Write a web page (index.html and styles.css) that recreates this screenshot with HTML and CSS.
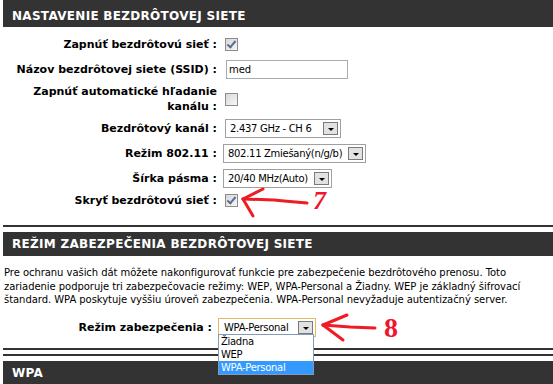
FILE: index.html
```html
<!DOCTYPE html>
<html lang="sk">
<head>
    <meta charset="UTF-8">
    <meta name="viewport" content="width=device-width, initial-scale=1.0">
    <title>Nastavenie bezdrôtovej siete</title>
    <link rel="stylesheet" href="styles.css">
</head>
<body>
<div class="page">

    <div class="box">
        <h2 class="box-title first">NASTAVENIE BEZDRÔTOVEJ SIETE</h2>
        <div class="form">
            <div class="row">
                <div class="lbl">Zapnúť bezdrôtovú sieť :</div>
                <div class="ctl"><span class="check on"></span></div>
            </div>
            <div class="row">
                <div class="lbl">Názov bezdrôtovej siete (SSID) :</div>
                <div class="ctl"><span class="textbox">med</span></div>
            </div>
            <div class="row tall">
                <div class="lbl">Zapnúť automatické hľadanie kanálu :</div>
                <div class="ctl"><span class="check"></span></div>
            </div>
            <div class="row">
                <div class="lbl">Bezdrôtový kanál :</div>
                <div class="ctl"><span class="select channel"><span class="val">2.437 GHz - CH 6</span><span class="btn"></span></span></div>
            </div>
            <div class="row">
                <div class="lbl">Režim 802.11 :</div>
                <div class="ctl"><span class="select mode"><span class="val">802.11 Zmiešaný(n/g/b)</span><span class="btn"></span></span></div>
            </div>
            <div class="row">
                <div class="lbl">Šírka pásma :</div>
                <div class="ctl"><span class="select band"><span class="val">20/40 MHz(Auto)</span><span class="btn"></span></span></div>
            </div>
            <div class="row short">
                <div class="lbl">Skryť bezdrôtovú sieť :</div>
                <div class="ctl"><span class="check on"></span></div>
            </div>
        </div>
    </div>

    <div class="box">
        <h2 class="box-title">REŽIM ZABEZPEČENIA BEZDRÔTOVEJ SIETE</h2>
        <p class="intro">Pre ochranu vašich dát môžete nakonfigurovať funkcie pre zabezpečenie bezdrôtového prenosu. Toto zariadenie podporuje tri zabezpečovacie režimy: WEP, WPA-Personal a Žiadny. WEP je základný šifrovací štandard. WPA poskytuje vyššiu úroveň zabezpečenia. WPA-Personal nevyžaduje autentizačný server.</p>
        <div class="form sec">
            <div class="row">
                <div class="lbl">Režim zabezpečenia :</div>
                <div class="ctl">
                    <span class="select security"><span class="val">WPA-Personal</span><span class="btn"></span></span>
                </div>
            </div>
        </div>
        <div class="sep"></div>
    </div>

    <div class="box">
        <h2 class="box-title">WPA</h2>
    </div>

    <ul class="dropdown">
        <li>Žiadna</li>
        <li>WEP</li>
        <li class="sel">WPA-Personal</li>
    </ul>

    <svg class="arrow arrow-7" width="80" height="34" viewBox="0 0 80 34">
        <path d="M3 14 L34 15 L44 16 L67 18" />
        <path d="M3 14 L23 4" />
        <path d="M3 14 L13 31" />
    </svg>
    <span class="mark mark-7">7</span>

    <svg class="arrow arrow-8" width="60" height="34" viewBox="0 0 60 34">
        <path d="M3 13 L30 15 L55 16" />
        <path d="M3 13 L27 3" />
        <path d="M3 13 L23 28" />
    </svg>
    <span class="mark mark-8">8</span>

</div>
</body>
</html>
```

FILE: styles.css
```css
body {
    margin: 0;
    background-color: white;
    font-family: "DejaVu Sans", Verdana, sans-serif;
    font-size: 10px;
    letter-spacing: -0.05px;
    color: black;
}
.page {
    position: relative;
    padding-left: 3px;
    overflow: hidden;
    height: 384px;
}
.box-title {
    margin: 0;
    height: 24px;
    line-height: 24px;
    padding-left: 9px;
    background-color: #333333;
    color: white;
    font-size: 12px;
    letter-spacing: 0.3px;
    font-weight: bold;
    white-space: nowrap;
}
.box-title.first {
    height: 27px;
    line-height: 33px;
}
.box + .box {
    border-top: 2px solid #333333;
    padding-top: 5px;
}
.form {
    padding: 7px 0 10px 0;
}
.row {
    display: grid;
    grid-template-columns: 214px auto;
    column-gap: 6px;
    align-items: center;
    height: 20px;
    margin-bottom: 5px;
}
.row.tall {
    height: 29px;
}
.row.short {
    margin-top: -3px;
}
.lbl {
    text-align: right;
    font-weight: bold;
    font-size: 11px;
    line-height: 15px;
    letter-spacing: 0;
}
.ctl {
    display: flex;
    align-items: center;
}
.check {
    display: inline-block;
    width: 11px;
    height: 11px;
    margin-left: 2px;
    border: 1px solid #8c8c8c;
    background: linear-gradient(135deg, #d8d8d8, #f6f6f6);
    position: relative;
}
.check.on::after {
    content: "";
    position: absolute;
    left: 3px;
    top: 0px;
    width: 3px;
    height: 7px;
    border: solid #5a6d98;
    border-width: 0 2px 2px 0;
    transform: rotate(40deg);
}
.textbox {
    display: inline-block;
    box-sizing: border-box;
    width: 122px;
    height: 19px;
    margin-left: 3px;
    padding-left: 2px;
    border: 1px solid #a5acb2;
    line-height: 17px;
}
.select {
    display: inline-flex;
    align-items: center;
    box-sizing: border-box;
    height: 19px;
    border: 1px solid #a0a0a0;
    padding: 0 2px 0 4px;
    white-space: nowrap;
    letter-spacing: -0.3px;
}
.select .val {
    flex: 1;
    overflow: hidden;
}
.select.channel {
    width: 116px;
    margin-left: 2px;
}
.select.mode {
    width: 143px;
}
.select.band {
    width: 109px;
}
.btn {
    position: relative;
    box-sizing: border-box;
    width: 15px;
    height: 13px;
    border: 1px solid #7a7a7a;
    background-color: #e2e2e2;
}
.btn::after {
    content: "";
    position: absolute;
    left: 4px;
    top: 5px;
    border-left: 3px solid transparent;
    border-right: 3px solid transparent;
    border-top: 3px solid black;
}
.intro {
    margin: 10px 0 0 1px;
    padding-right: 30px;
    line-height: 13.5px;
}
.form.sec {
    padding: 11px 0 10px 0;
}
.form.sec .row {
    grid-template-columns: 209px auto;
    margin-bottom: 0;
}
.select.security {
    width: 98px;
    border-color: #e2bb62;
    padding-left: 5px;
}
.sep {
    border-top: 2px solid #333333;
    margin-bottom: 4px;
}
.dropdown {
    position: absolute;
    left: 218px;
    top: 334px;
    width: 94px;
    margin: 0;
    padding: 0;
    list-style: none;
    background-color: white;
    border: 1px solid #7f9db9;
    letter-spacing: -0.3px;
}
.dropdown li {
    height: 13px;
    line-height: 13px;
    padding-left: 2px;
}
.dropdown li.sel {
    background-color: #3399ff;
    color: white;
}
.arrow {
    position: absolute;
    fill: none;
    stroke: #ee1c24;
    stroke-width: 3;
    stroke-linecap: round;
    stroke-linejoin: round;
}
.arrow-7 {
    left: 240px;
    top: 185px;
}
.arrow-8 {
    left: 320px;
    top: 312px;
}
.mark {
    position: absolute;
    color: #f0142c;
    font-family: "Liberation Serif", serif;
    font-weight: bold;
}
.mark-7 {
    left: 313px;
    top: 186px;
    font-size: 26px;
    font-style: italic;
}
.mark-8 {
    left: 384px;
    top: 312px;
    font-size: 28px;
}
```
